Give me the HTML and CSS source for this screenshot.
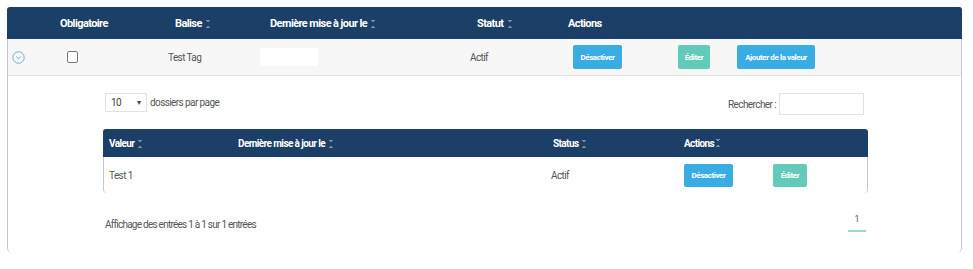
FILE: index.html
```html
<!DOCTYPE html>
<html lang="fr">
<head>
  <meta charset="UTF-8">
  <meta name="viewport" content="width=device-width, initial-scale=1.0">
  <title>Balises</title>
  <link rel="stylesheet" href="styles.css">
</head>
<body>

  <div class="card">
    <!-- En-tête du tableau principal -->
    <div class="main-grid main-head">
      <div></div>
      <div class="th c2">Obligatoire</div>
      <div class="th c3">Balise <span class="sort"></span></div>
      <div class="th c4">Dernière mise à jour le <span class="sort"></span></div>
      <div class="th c5">Statut <span class="sort"></span></div>
      <div class="th c6">Actions</div>
    </div>

    <!-- Ligne de la balise -->
    <div class="main-grid main-row">
      <div class="td r1">
        <svg class="chevron" width="13" height="13" viewBox="0 0 13 13">
          <circle cx="6.5" cy="6.5" r="5.7" fill="none" stroke="#6fa9d6" stroke-width="1"/>
          <path d="M4.2 5.6 L6.5 7.9 L8.8 5.6" fill="none" stroke="#6fa9d6" stroke-width="1"/>
        </svg>
      </div>
      <div class="td r2"><span class="checkbox"></span></div>
      <div class="td r3">Test Tag</div>
      <div class="td r4"><span class="blank"></span></div>
      <div class="td r5">Actif</div>
      <div class="td r6">
        <button class="btn btn-blue">Désactiver</button>
        <button class="btn btn-teal btn-edit">Éditer</button>
        <button class="btn btn-blue btn-add">Ajouter de la valeur</button>
      </div>
    </div>

    <!-- Détail : valeurs de la balise -->
    <div class="detail">
      <div class="toolbar">
        <div class="length">
          <span class="select">10 <span class="caret">▾</span></span>
          <span>dossiers par page</span>
        </div>
        <div class="search">
          <span>Rechercher :</span>
          <span class="search-input"></span>
        </div>
      </div>

      <div class="subtable">
        <div class="sub-grid sub-head">
          <div class="th s1">Valeur <span class="sort"></span></div>
          <div class="th s2">Dernière mise à jour le <span class="sort"></span></div>
          <div class="th s3">Status <span class="sort"></span></div>
          <div class="th s4">Actions <span class="sort"></span></div>
        </div>
        <div class="sub-grid sub-row">
          <div class="td s1">Test 1</div>
          <div class="td"></div>
          <div class="td s3">Actif</div>
          <div class="td s4">
            <button class="btn btn-blue">Désactiver</button>
            <button class="btn btn-teal btn-edit2">Éditer</button>
          </div>
        </div>
      </div>

      <div class="footer">
        <span class="info">Affichage des entrées 1 à 1 sur 1 entrées</span>
        <span class="page">1</span>
      </div>
    </div>
  </div>

</body>
</html>
```

FILE: styles.css
```css
/* Styles globaux */
body {
  font-family: 'Roboto', 'Liberation Sans', sans-serif;
  font-size: 10px;
  letter-spacing: -0.6px;
  color: #555;
  background-color: #fff;
  margin: 0;
  padding: 7px 0 0 7px;
}

.card {
  width: 955px;
  height: 246px;
  border-left: 1px solid #c5cbd1;
  border-right: 1px solid #c5cbd1;
  border-radius: 4px 4px 5px 5px;
  box-sizing: border-box;
}

/* Tableau principal */
.main-grid {
  display: grid;
  grid-template-columns: 47px 105px 95px 205px 100px 1fr;
  align-items: center;
}

.main-head {
  height: 32px;
  background-color: #1b3f66;
  color: #fff;
  margin: 0 -1px;
  padding: 0 1px;
  border-radius: 3px 3px 0 0;
}

.th {
  font-weight: bold;
  font-size: 11px;
}

.sort {
  display: inline-block;
  width: 4px;
  height: 8px;
  margin-left: 2px;
  vertical-align: -1px;
  background:
    linear-gradient(to top right, transparent 50%, rgba(255, 255, 255, 0.4) 50%) left top / 2px 3px no-repeat,
    linear-gradient(to top left, transparent 50%, rgba(255, 255, 255, 0.4) 50%) right top / 2px 3px no-repeat,
    linear-gradient(to bottom right, transparent 50%, rgba(255, 255, 255, 0.4) 50%) left bottom / 2px 3px no-repeat,
    linear-gradient(to bottom left, transparent 50%, rgba(255, 255, 255, 0.4) 50%) right bottom / 2px 3px no-repeat;
}

.c2 { padding-left: 5px; }
.c3 { padding-left: 15px; }
.c4 { padding-left: 15px; }
.c5 { padding-left: 17px; }
.c6 { padding-left: 8px; }

.main-row {
  height: 37px;
  background-color: #f7f7f7;
  border-bottom: 1px solid #e4e4e4;
  box-sizing: border-box;
}

.r1 { padding-left: 4px; display: flex; }
.r2 { padding-left: 12px; display: flex; }
.r3 { padding-left: 8px; }
.r4 { padding-left: 5px; display: flex; }
.r5 { padding-left: 10px; }
.r6 { padding-left: 13px; display: flex; align-items: center; }

.checkbox {
  width: 9px;
  height: 10px;
  border: 1px solid #777;
  border-radius: 2px;
  background-color: #fff;
}

.blank {
  width: 58px;
  height: 18px;
  background-color: #fff;
}

/* Boutons */
.btn {
  border: none;
  border-radius: 2px;
  color: #fff;
  font-family: 'Roboto', sans-serif;
  font-weight: bold;
  font-size: 8px;
  letter-spacing: -0.4px;
  height: 24px;
  padding: 0 6px;
  cursor: pointer;
}

.btn-blue { background-color: #38ace3; }
.btn-teal { background-color: #62cab8; }

.main-row .btn { min-width: 49px; }
.btn-edit { min-width: 32px !important; margin-left: 56px; }
.btn-add { width: 78px; margin-left: 27px; }

/* Détail */
.detail {
  padding: 17px 93px 0 95px;
}

.toolbar {
  display: flex;
  justify-content: space-between;
  align-items: center;
  height: 22px;
}

.length {
  display: flex;
  align-items: center;
  padding-left: 2px;
  gap: 3px;
  margin-top: -3px;
}

.select {
  display: flex;
  justify-content: space-between;
  align-items: center;
  width: 42px;
  height: 19px;
  border: 1px solid #e2e2e2;
  box-sizing: border-box;
  padding: 0 6px 0 5px;
  color: #444;
}

.caret {
  font-size: 8px;
  color: #444;
}

.search {
  display: flex;
  align-items: center;
  gap: 3px;
  padding-right: 4px;
}

.search-input {
  width: 85px;
  height: 22px;
  border: 1px solid #e2e2e2;
  box-sizing: border-box;
}

/* Tableau des valeurs */
.subtable {
  margin-top: 14px;
  border-left: 1px solid #c5cbd1;
  border-right: 1px solid #c5cbd1;
  border-radius: 4px;
}

.sub-grid {
  display: grid;
  grid-template-columns: 127px 315px 130px 1fr;
  align-items: center;
}

.sub-head {
  height: 28px;
  background-color: #1b3f66;
  color: #fff;
  margin: 0 -1px;
  padding: 0 1px;
  border-radius: 3px 3px 0 0;
}

.sub-head .th { font-size: 10px; }

.s1 { padding-left: 5px; }
.s2 { padding-left: 7px; }
.s3 { padding-left: 7px; }
.s4 { padding-left: 8px; display: flex; align-items: center; }

.sub-row {
  height: 36px;
}

.sub-row .s3 { padding-left: 5px; }

.sub-row .btn { height: 23px; }
.sub-row .btn-blue { min-width: 49px; }
.btn-edit2 { min-width: 34px; margin-left: 40px; }

/* Pied */
.footer {
  display: flex;
  justify-content: space-between;
  align-items: center;
  padding: 23px 2px 0 2px;
}

.info {
  letter-spacing: -0.75px;
}

.page {
  padding: 0 7px 6px;
  margin-top: -2px;
  border-bottom: 2px solid #9ad8cc;
  color: #555;
  font-size: 9px;
}
```
